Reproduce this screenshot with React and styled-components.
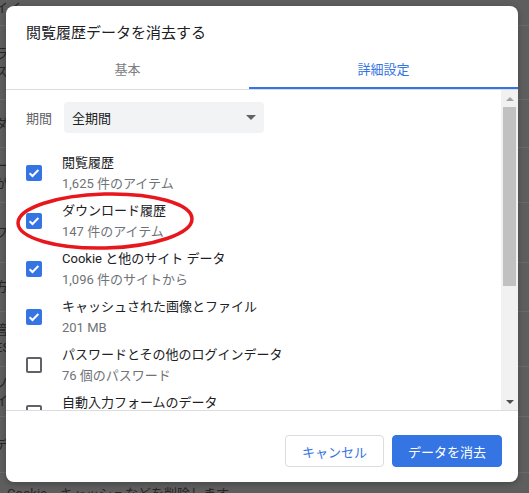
import React from "react";
import styled, { createGlobalStyle } from "styled-components";

const FONT = `Roboto, "Noto Sans CJK JP", "Noto Sans", sans-serif`;
const BLUE = "#3574e3";

const Global = createGlobalStyle`
  html, body { margin: 0; padding: 0; background: #5e5e5e; }
  body { font-family: ${FONT}; }
  * { box-sizing: border-box; }
`;

const Page = styled.div`
  position: relative;
  width: 529px;
  height: 493px;
  overflow: hidden;
  background: #5e5e5e;
`;

/* underlying (dimmed) settings page */
const Backdrop = styled.div`
  display: flex;
  flex-direction: column;
  width: 100%;
`;

const BgRow = styled.div`
  height: ${(p) => p.h}px;
  border-bottom: 1px solid ${(p) => (p.last ? "transparent" : "#6a6a6a")};
  display: flex;
  flex-direction: column;
  justify-content: ${(p) => p.justify || "center"};
  padding-left: ${(p) => p.indent ?? 0}px;
  margin-left: ${(p) => (p.indent !== undefined ? 0 : -5)}px;
  gap: 2px;
  color: #262626;
  font-size: 13px;
  line-height: 16px;
  white-space: nowrap;
`;

const Dialog = styled.div`
  position: absolute;
  left: 6px;
  top: 6px;
  width: 512px;
  height: 476px;
  background: #fff;
  border-radius: 8px;
  display: flex;
  flex-direction: column;
  overflow: hidden;
  box-shadow: 0 2px 6px rgba(0, 0, 0, 0.25);
`;

const Title = styled.h2`
  margin: 0;
  padding: 16px 20px 0;
  font-size: 15px;
  line-height: 22px;
  font-weight: 400;
  color: #202124;
`;

const Tabs = styled.div`
  display: flex;
  height: 46px;
  border-bottom: 1px solid #dadce0;
`;

const Tab = styled.div`
  flex: ${(p) => (p.fixed ? `0 0 ${p.fixed}px` : "1")};
  display: flex;
  align-items: flex-end;
  justify-content: center;
  padding-bottom: 7px;
  font-size: 13px;
  line-height: 20px;
  color: ${(p) => (p.active ? BLUE : "#7a7d80")};
  border-bottom: 2px solid ${(p) => (p.active ? BLUE : "transparent")};
`;

const Body = styled.div`
  flex: 1;
  display: flex;
  min-height: 0;
`;

const Scroller = styled.div`
  flex: 1;
  overflow: hidden;
  padding: 12px 0 0 20px;
`;

const PeriodRow = styled.div`
  display: flex;
  align-items: center;
  gap: 12px;
  height: 31px;
  margin-bottom: 15px;
`;

const Label = styled.span`
  font-size: 13px;
  color: #5f6368;
  white-space: nowrap;
`;

const Select = styled.div`
  width: 200px;
  height: 31px;
  background: #f1f3f4;
  border-radius: 4px;
  display: flex;
  align-items: center;
  justify-content: space-between;
  padding: 0 8px 0 8px;
  font-size: 13px;
  color: #202124;
  white-space: nowrap;
`;

const Item = styled.div`
  display: flex;
  align-items: center;
  gap: 20px;
  height: 48px;
  padding: 4px 0 2px;
`;

const Box = styled.div`
  flex: 0 0 16px;
  width: 16px;
  height: 16px;
  border-radius: 2px;
  background: ${(p) => (p.checked ? BLUE : "#fff")};
  border: ${(p) => (p.checked ? "none" : "2px solid #5f6368")};
  display: flex;
  align-items: center;
  justify-content: center;
`;

const Texts = styled.div`
  display: flex;
  flex-direction: column;
  justify-content: flex-start;
  height: 42px;
  white-space: nowrap;
`;

const ItemTitle = styled.div`
  font-size: 13px;
  line-height: 21px;
  color: #202124;
`;

const ItemSub = styled.div`
  font-size: 13px;
  line-height: 21px;
  color: #6f7377;
`;

const ScrollBar = styled.div`
  flex: 0 0 17px;
  background: #f1f1f1;
  display: flex;
  flex-direction: column;
`;

const ScrollButton = styled.div`
  height: 17px;
  display: flex;
  align-items: center;
  justify-content: center;
`;

const Thumb = styled.div`
  height: 179px;
  margin: 0 2px;
  background: #c1c1c1;
`;

const Track = styled.div`
  flex: 1;
`;

const Footer = styled.div`
  border-top: 1px solid #dadce0;
  display: flex;
  justify-content: flex-end;
  gap: 8px;
  padding: 24px 16px 15px;
`;

const Button = styled.button`
  height: 32px;
  padding: 0;
  border-radius: 4px;
  font-family: ${FONT};
  font-size: 13px;
  white-space: nowrap;
  text-align: center;
  border: 1px solid ${(p) => (p.primary ? BLUE : "#dadce0")};
  background: ${(p) => (p.primary ? BLUE : "#fff")};
  color: ${(p) => (p.primary ? "#fff" : BLUE)};
  width: ${(p) => p.w}px;
`;

const Annotation = styled.svg`
  position: absolute;
  left: 14px;
  top: 190px;
  pointer-events: none;
`;

const Check = () => (
  <svg width="12" height="12" viewBox="0 0 12 12">
    <path d="M1.6 6.2 L4.5 9 L10.4 3" fill="none" stroke="#fff" strokeWidth="2" />
  </svg>
);

const items = [
  { title: "閲覧履歴", sub: "1,625 件のアイテム", checked: true },
  { title: "ダウンロード履歴", sub: "147 件のアイテム", checked: true },
  { title: "Cookie と他のサイト データ", sub: "1,096 件のサイトから", checked: true },
  { title: "キャッシュされた画像とファイル", sub: "201 MB", checked: true },
  { title: "パスワードとその他のログインデータ", sub: "76 個のパスワード", checked: false },
  { title: "自動入力フォームのデータ", sub: "", checked: false },
];

export default function App() {
  return (
    <Page>
      <Global />
      <Backdrop>
        <BgRow h={26} justify="flex-start"><span>イイ</span></BgRow>
        <BgRow h={74}><span>ラン</span><span>スス</span></BgRow>
        <BgRow h={48}><span>ダダ</span></BgRow>
        <BgRow h={55}><span>ーー</span><span>がが</span></BgRow>
        <BgRow h={60}><span>フフ</span></BgRow>
        <BgRow h={49}><span>方方</span></BgRow>
        <BgRow h={55}><span>管管</span><span>ES</span></BgRow>
        <BgRow h={50}><span>ソソ</span><span>イイ</span></BgRow>
        <BgRow h={56}><span>デデ</span></BgRow>
        <BgRow h={30} indent={7} last justify="flex-end"><span>Cookie、キャッシュなどを削除します</span></BgRow>
      </Backdrop>

      <Dialog>
        <Title>閲覧履歴データを消去する</Title>
        <Tabs>
          <Tab fixed={243}>基本</Tab>
          <Tab active>詳細設定</Tab>
        </Tabs>
        <Body>
          <Scroller>
            <PeriodRow>
              <Label>期間</Label>
              <Select>
                <span>全期間</span>
                <svg width="10" height="5" viewBox="0 0 10 5">
                  <path d="M0 0 L10 0 L5 5 Z" fill="#5f6368" />
                </svg>
              </Select>
            </PeriodRow>
            {items.map((it) => (
              <Item key={it.title}>
                <Box checked={it.checked}>{it.checked && <Check />}</Box>
                <Texts>
                  <ItemTitle>{it.title}</ItemTitle>
                  {it.sub && <ItemSub>{it.sub}</ItemSub>}
                </Texts>
              </Item>
            ))}
          </Scroller>
          <ScrollBar>
            <ScrollButton>
              <svg width="8" height="4" viewBox="0 0 8 4">
                <path d="M0 4 L8 4 L4 0 Z" fill="#a3a3a3" />
              </svg>
            </ScrollButton>
            <Thumb />
            <Track />
            <ScrollButton>
              <svg width="8" height="4" viewBox="0 0 8 4">
                <path d="M0 0 L8 0 L4 4 Z" fill="#505050" />
              </svg>
            </ScrollButton>
          </ScrollBar>
        </Body>
        <Footer>
          <Button w={99}>キャンセル</Button>
          <Button primary w={110}>データを消去</Button>
        </Footer>
      </Dialog>

      <Annotation width="184" height="64" viewBox="0 0 184 64">
        <ellipse cx="91" cy="31" rx="87" ry="27" fill="none" stroke="#e8161d" strokeWidth="3.5" transform="rotate(-1.5 91 31)" />
      </Annotation>
    </Page>
  );
}
